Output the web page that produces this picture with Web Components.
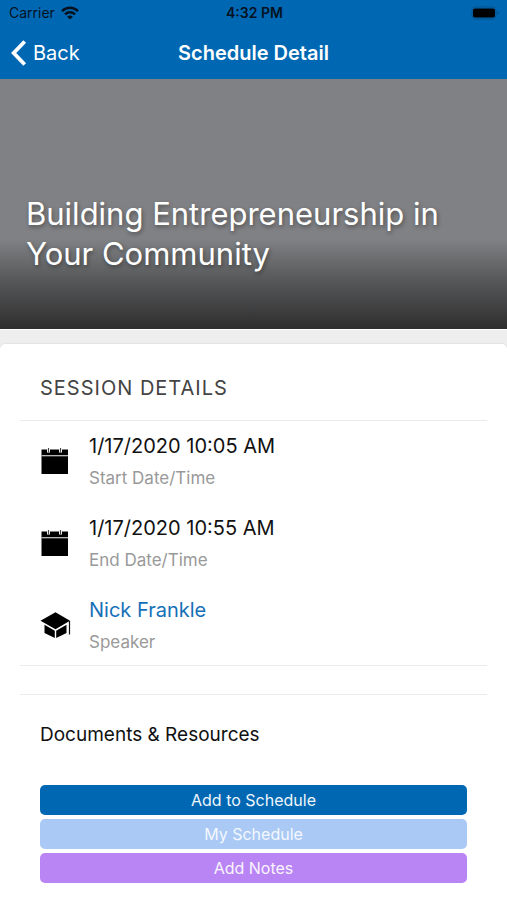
<!DOCTYPE html>
<html lang="en">
<head>
<meta charset="utf-8">
<meta name="viewport" content="width=device-width, initial-scale=1">
<title>Schedule Detail</title>
<style>
html { height: 100%; }
body { margin: 0; min-height: 100%; display: flex; flex-direction: column; background: #eeeeee; font-family: Inter, "Liberation Sans", sans-serif; color: #111; }
schedule-page { flex: 1; }
</style>
</head>
<body>
<schedule-page></schedule-page>
<script>
function define(name, markup, setup) {
  const template = document.createElement('template');
  template.innerHTML = markup;
  customElements.define(name, class extends HTMLElement {
    constructor() {
      super();
      this.attachShadow({ mode: 'open' }).append(template.content.cloneNode(true));
    }
    connectedCallback() {
      if (setup) setup(this, this.shadowRoot);
    }
  });
}

define('status-bar', `
<style>
:host { display: grid; grid-template-columns: 1fr auto 1fr; align-items: center; height: 26px; padding: 0 7px 0 9px; color: #06121f; font-size: 14px; line-height: 16px; }
.carrier { display: flex; align-items: center; gap: 6px; }
.time { font-weight: 600; }
.battery { justify-self: end; }
svg { display: block; }
</style>
<div class="carrier"><span>Carrier</span>
<svg width="18" height="14" viewBox="0 0 18 14" fill="none" stroke="#06121f" stroke-width="2.5" aria-hidden="true"><path d="M1 5.2C5.6.7 12.400.7 17 5.200M4 8.400C6.800 5.600 11.200 5.600 14 8.400"/><path d="M9 13.600 6.100 10.700C7.700 9.200 10.300 9.200 11.900 10.700Z" fill="#06121f" stroke="none"/></svg></div>
<div class="time">4:32 PM</div>
<svg class="battery" width="29" height="14" viewBox="0 0 29 14" aria-hidden="true"><rect x="1" y="1" width="24" height="12" rx="3.500" fill="none" stroke="#04518c"/><rect x="2" y="2.500" width="22" height="9" rx="2" fill="#000"/><path d="M26.500 5v4q1.500-.5 1.500-2t-1.500-2" fill="#04518c"/></svg>
`);

define('nav-bar', `
<style>
:host { display: grid; grid-template-columns: 1fr auto 1fr; align-items: center; height: 53px; padding: 0 11px; color: #fff; }
button { display: flex; align-items: center; gap: 6px; justify-self: start; padding: 0; border: 0; background: none; color: inherit; font: 400 20px/24px Inter, "Liberation Sans", sans-serif; cursor: pointer; }
h1 { margin: 0; font-size: 20px; line-height: 24px; font-weight: 600; }
svg { display: block; }
</style>
<button type="button"><svg width="16" height="26" viewBox="0 0 16 26" fill="none" stroke="#fff" stroke-width="3.800" aria-hidden="true"><path d="M13.700 1.500 2.700 13l11 11.500"/></svg><span>Back</span></button>
<h1><slot></slot></h1>
`);

define('session-hero', `
<style>
:host { display: flex; flex-direction: column; justify-content: flex-end; box-sizing: border-box; min-height: 251px; padding: 0 26px 55px; background: linear-gradient(#808184 0, #808184 64%, #58595a 80%, #2e2e2f 100%); border-bottom: 1px solid #fff; background-clip: padding-box; }
h2 { margin: 0; color: #fff; font-weight: 400; font-size: 31px; line-height: 40px; text-shadow: 1px 2px 4px rgba(0,0,0,.4); }
</style>
<h2><slot></slot></h2>
`);

define('glyph-icon', `
<style>
:host { display: block; width: 32px; height: 32px; }
svg { display: none; width: 32px; height: 32px; }
:host([name="calendar"]) .calendar, :host([name="cap"]) .cap { display: block; }
</style>
<svg class="calendar" viewBox="0 0 32 32" aria-hidden="true"><path d="M1.500 4.500H28V29H1.500z"/><path d="M1.500 10.700H28" stroke="#ccc" stroke-width="1.200"/><path d="M8.500 3v4.500M20.500 3v4.500" stroke="#fff" stroke-width="3"/><path d="M8.500 3v4.500M20.500 3v4.500" stroke="#444" stroke-width="1.200"/></svg>
<svg class="cap" viewBox="0 0 32 32" aria-hidden="true"><path d="M15.500 3.200 30 11.800 15.500 20.200 .5 11.800z"/><path d="M4.500 15.700 14.800 21.700v7.200L4.500 24zM16.200 21.700l10.300-6V24l-10.300 4.900z"/><path d="M29.500 12v13.500" fill="none" stroke="#111" stroke-width="1.200"/></svg>
`);

define('detail-row', `
<style>
:host { display: grid; grid-template-columns: 32px 1fr; column-gap: 17px; align-items: center; box-sizing: border-box; min-height: 80px; padding: 0 20px; }
.text { display: grid; row-gap: 8px; padding-top: 2px; }
.value { font-size: 20px; line-height: 24px; color: #111; }
.label { font-size: 17px; line-height: 24px; color: #999; }
::slotted(a) { color: #1670b8; text-decoration: none; }
</style>
<glyph-icon></glyph-icon>
<div class="text"><div class="value"><slot></slot></div><div class="label"></div></div>
`, (host, root) => {
  root.querySelector('glyph-icon').setAttribute('name', host.getAttribute('icon'));
  root.querySelector('.label').textContent = host.getAttribute('label');
});

define('action-button', `
<style>
:host { display: block; }
button { display: block; width: 100%; height: 30px; padding: 0; border: 0; border-radius: 5px; background: var(--fill, #0068b3); color: var(--ink, #eef6fc); font: 400 16px/20px Inter, "Liberation Sans", sans-serif; cursor: pointer; }
:host([tone="light"]) { --fill: #aac9f4; --ink: #f4f8fe; }
:host([tone="violet"]) { --fill: #b984f3; --ink: #faf5ff; }
</style>
<button type="button"><slot></slot></button>
`);

define('session-card', `
<style>
:host { display: block; box-sizing: border-box; padding: 16px 20px; background: #fff; border-radius: 5px 5px 0 0; box-shadow: 0 0 2px rgba(0,0,0,.15); }
h3, h4 { margin: 0; font-weight: 400; }
h3 { padding: 16px 20px 20px; font-size: 20px; line-height: 24px; letter-spacing: 1px; text-transform: uppercase; color: #444; border-bottom: 1px solid #ebebeb; }
.rows { display: grid; gap: 2px; border-bottom: 1px solid #ebebeb; }
h4 { margin-top: 28px; padding: 28px 20px; font-size: 19px; line-height: 24px; color: #111; border-top: 1px solid #ebebeb; }
.actions { display: grid; gap: 4px; padding: 10px 20px 0; }
</style>
<h3>Session Details</h3>
<div class="rows">
<detail-row icon="calendar" label="Start Date/Time">1/17/2020 10:05 AM</detail-row>
<detail-row icon="calendar" label="End Date/Time">1/17/2020 10:55 AM</detail-row>
<detail-row icon="cap" label="Speaker"><a href="#speaker">Nick Frankle</a></detail-row>
</div>
<h4>Documents &amp; Resources</h4>
<div class="actions">
<action-button>Add to Schedule</action-button>
<action-button tone="light">My Schedule</action-button>
<action-button tone="violet">Add Notes</action-button>
</div>
`);

define('schedule-page', `
<style>
:host { display: flex; flex-direction: column; }
header { background: #0068b3; }
main { flex: 1; display: flex; flex-direction: column; gap: 14px; }
session-card { flex: 1; }
</style>
<header><status-bar></status-bar><nav-bar>Schedule Detail</nav-bar></header>
<main><session-hero>Building Entrepreneurship in Your Community</session-hero><session-card></session-card></main>
`);
</script>
</body>
</html>
